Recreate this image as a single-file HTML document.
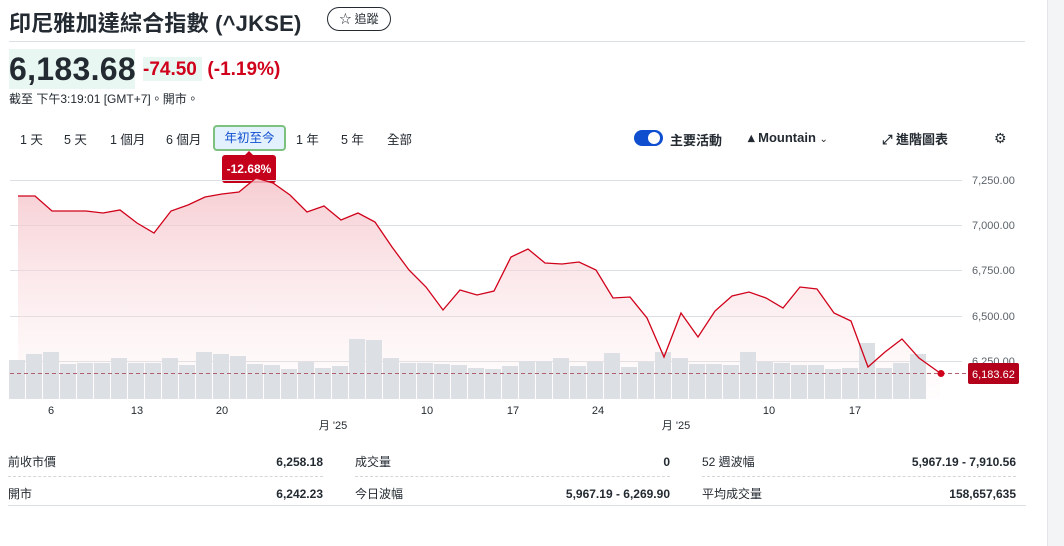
<!DOCTYPE html>
<html><head><meta charset="utf-8"><style>
*{margin:0;padding:0;box-sizing:border-box}
body{width:1064px;height:546px;overflow:hidden;background:#fff;font-family:"Liberation Sans","Noto Sans CJK TC",sans-serif;color:#232a31;position:relative}
.abs{position:absolute;white-space:nowrap}
.sb{position:absolute;left:1047px;top:0;width:17px;height:546px;background:#f3f4f6;border-left:1px solid #e3e5e8}
.tab{position:absolute;top:129px;font-size:12.5px;color:#232a31}
.row{position:absolute;font-size:12px;display:flex;justify-content:space-between;align-items:baseline}
.row b{font-weight:600}
</style></head><body>
<div class="sb"></div>
<div class="abs" style="left:9px;top:6px;font-size:22px;font-weight:bold;letter-spacing:0.2px">印尼雅加達綜合指數 (^JKSE)</div>
<div class="abs" style="left:327px;top:7px;width:64px;height:24px;border:1px solid #232a31;border-radius:12px;font-size:12px;line-height:22px;text-align:center">☆ 追蹤</div>
<div class="abs" style="left:9px;top:41px;width:1016px;height:1px;background:#dcdfe3"></div>
<div class="abs" style="left:9px;top:49px;width:126px;height:40px;background:#e8f7f1"></div>
<div class="abs" style="left:143px;top:57px;width:59px;height:24px;background:#e8f7f1"></div>
<div class="abs" style="left:9px;top:51px;font-size:32px;font-weight:bold;letter-spacing:0.3px">6,183.68</div>
<div class="abs" style="left:143px;top:59px;font-size:19px;font-weight:bold;color:#d0021b">-74.50 &nbsp;(-1.19%)</div>
<div class="abs" style="left:9px;top:90px;font-size:12px;color:#232a31">截至 下午3:19:01 [GMT+7]。開市。</div>
<div class="tab" style="left:20px">1 天</div>
<div class="tab" style="left:64px">5 天</div>
<div class="tab" style="left:110px">1 個月</div>
<div class="tab" style="left:166px">6 個月</div>
<div class="abs" style="left:213px;top:125px;width:73px;height:26px;border:2px solid #7cc27e;border-radius:4px;background:#e3f0fd;color:#0f4fcf;font-size:12.5px;line-height:22px;text-align:center">年初至今</div>
<div class="tab" style="left:296px">1 年</div>
<div class="tab" style="left:341px">5 年</div>
<div class="tab" style="left:387px">全部</div>
<div class="abs" style="left:222px;top:155px;width:54px;height:28px;background:#c5001b;border-radius:3px;color:#fff;font-size:12px;font-weight:bold;line-height:28px;text-align:center">-12.68%</div>
<div class="abs" style="left:244px;top:151px;width:0;height:0;border-left:5px solid transparent;border-right:5px solid transparent;border-bottom:5px solid #c5001b"></div>
<div class="abs" style="left:634px;top:130px;width:29px;height:16px;border-radius:8px;background:#0f4fcf"></div>
<div class="abs" style="left:648px;top:132px;width:12px;height:12px;border-radius:6px;background:#fff"></div>
<div class="abs" style="left:670px;top:130px;font-size:13px;font-weight:bold">主要活動</div>
<div class="abs" style="left:748px;top:130px;font-size:13px;font-weight:bold">▴ Mountain <span style="font-size:10px;font-weight:normal">⌄</span></div>
<div class="abs" style="left:882px;top:129px;font-size:13px;font-weight:bold">⤢ 進階圖表</div>
<div class="abs" style="left:994px;top:130px;font-size:14px">⚙</div>
<svg class="abs" style="left:0;top:0" width="1064" height="546">
<defs><linearGradient id="g" x1="0" y1="0" x2="0" y2="1"><stop offset="0" stop-color="#f4c3c9" stop-opacity=".85"/><stop offset="1" stop-color="#fde8ea" stop-opacity=".1"/></linearGradient></defs>
<g stroke="#dcdfe3" stroke-width="1">
<line x1="10" y1="180.5" x2="962" y2="180.5"/><line x1="10" y1="225.5" x2="962" y2="225.5"/><line x1="10" y1="270.5" x2="962" y2="270.5"/><line x1="10" y1="316.5" x2="962" y2="316.5"/><line x1="10" y1="361.5" x2="962" y2="361.5"/></g>
<path d="M18,196 L35,196 L52,211 L69,211 L86,211 L103,213 L120,210 L137,223 L154,233 L171,211 L188,205 L205,197 L222,194 L239,192 L256,178 L273,183 L290,195 L307,212 L324,206 L341,220 L358,213 L375,222 L392,247 L409,270 L426,287 L443,310 L460,290 L477,295 L494,291 L511,257 L528,249 L545,263 L562,264 L579,262 L596,270 L613,298 L630,297 L647,318 L664,357 L681,313 L698,337 L715,311 L732,296 L749,292 L766,298 L783,308 L800,287 L817,289 L834,313 L851,321 L868,367 L885,352 L902,339 L919,358 L940,373 L940,399 L18,399 Z" fill="url(#g)"/>
<g fill="#dcdfe3">
<rect x="9" y="360" width="16" height="39"/><rect x="26" y="354" width="16" height="45"/><rect x="43" y="352" width="16" height="47"/><rect x="60" y="364" width="16" height="35"/><rect x="77" y="363" width="16" height="36"/><rect x="94" y="363" width="16" height="36"/><rect x="111" y="358" width="16" height="41"/><rect x="128" y="363" width="16" height="36"/><rect x="145" y="363" width="16" height="36"/><rect x="162" y="358" width="16" height="41"/><rect x="179" y="365" width="16" height="34"/><rect x="196" y="352" width="16" height="47"/><rect x="213" y="354" width="16" height="45"/><rect x="230" y="356" width="16" height="43"/><rect x="247" y="364" width="16" height="35"/><rect x="264" y="365" width="16" height="34"/><rect x="281" y="369" width="16" height="30"/><rect x="298" y="362" width="16" height="37"/><rect x="315" y="368" width="16" height="31"/><rect x="332" y="366" width="16" height="33"/><rect x="349" y="339" width="16" height="60"/><rect x="366" y="340" width="16" height="59"/><rect x="383" y="358" width="16" height="41"/><rect x="400" y="363" width="16" height="36"/><rect x="417" y="363" width="16" height="36"/><rect x="434" y="364" width="16" height="35"/><rect x="451" y="365" width="16" height="34"/><rect x="468" y="368" width="16" height="31"/><rect x="485" y="369" width="16" height="30"/><rect x="502" y="366" width="16" height="33"/><rect x="519" y="361" width="16" height="38"/><rect x="536" y="361" width="16" height="38"/><rect x="553" y="358" width="16" height="41"/><rect x="570" y="366" width="16" height="33"/><rect x="587" y="362" width="16" height="37"/><rect x="604" y="353" width="16" height="46"/><rect x="621" y="367" width="16" height="32"/><rect x="638" y="362" width="16" height="37"/><rect x="655" y="352" width="16" height="47"/><rect x="672" y="358" width="16" height="41"/><rect x="689" y="364" width="16" height="35"/><rect x="706" y="364" width="16" height="35"/><rect x="723" y="365" width="16" height="34"/><rect x="740" y="352" width="16" height="47"/><rect x="757" y="362" width="16" height="37"/><rect x="774" y="363" width="16" height="36"/><rect x="791" y="365" width="16" height="34"/><rect x="808" y="365" width="16" height="34"/><rect x="825" y="369" width="16" height="30"/><rect x="842" y="368" width="16" height="31"/><rect x="859" y="343" width="16" height="56"/><rect x="876" y="368" width="16" height="31"/><rect x="893" y="363" width="16" height="36"/><rect x="910" y="354" width="16" height="45"/></g>
<line x1="10" y1="373.5" x2="968" y2="373.5" stroke="#b06070" stroke-dasharray="4,3" stroke-width="1"/>
<polyline fill="none" stroke="#d0021b" stroke-width="1.3" points="18,196 35,196 52,211 69,211 86,211 103,213 120,210 137,223 154,233 171,211 188,205 205,197 222,194 239,192 256,178 273,183 290,195 307,212 324,206 341,220 358,213 375,222 392,247 409,270 426,287 443,310 460,290 477,295 494,291 511,257 528,249 545,263 562,264 579,262 596,270 613,298 630,297 647,318 664,357 681,313 698,337 715,311 732,296 749,292 766,298 783,308 800,287 817,289 834,313 851,321 868,367 885,352 902,339 919,358 940,373"/>
<circle cx="941" cy="373.5" r="3.5" fill="#d0021b"/>
<g font-size="11" fill="#5b636a" font-family="Liberation Sans,sans-serif">
<text x="972" y="184">7,250.00</text><text x="972" y="229">7,000.00</text><text x="972" y="274">6,750.00</text><text x="972" y="320">6,500.00</text><text x="972" y="365">6,250.00</text></g>
<rect x="968" y="363" width="51" height="21" rx="2" fill="#b3001b"/>
<text x="972" y="378" font-size="11" fill="#fff" font-family="Liberation Sans,sans-serif">6,183.62</text>
<g font-size="11" fill="#232a31" font-family="Liberation Sans,'Noto Sans CJK TC',sans-serif" text-anchor="middle">
<text x="51" y="414">6</text><text x="137" y="414">13</text><text x="222" y="414">20</text><text x="427" y="414">10</text><text x="513" y="414">17</text><text x="598" y="414">24</text><text x="769" y="414">10</text><text x="855" y="414">17</text>
<text x="333" y="429">月 '25</text><text x="676" y="429">月 '25</text></g>
</svg>
<div class="row" style="left:8px;top:453px;width:315px"><span>前收市價</span><b>6,258.18</b></div>
<div class="row" style="left:355px;top:453px;width:315px"><span>成交量</span><b>0</b></div>
<div class="row" style="left:702px;top:453px;width:314px"><span>52 週波幅</span><b>5,967.19 - 7,910.56</b></div>
<div class="abs" style="left:8px;top:476px;width:315px;border-top:1px dashed #d4d6da"></div>
<div class="abs" style="left:355px;top:476px;width:315px;border-top:1px dashed #d4d6da"></div>
<div class="abs" style="left:702px;top:476px;width:314px;border-top:1px dashed #d4d6da"></div>
<div class="row" style="left:8px;top:485px;width:315px"><span>開市</span><b>6,242.23</b></div>
<div class="row" style="left:355px;top:485px;width:315px"><span>今日波幅</span><b>5,967.19 - 6,269.90</b></div>
<div class="row" style="left:702px;top:485px;width:314px"><span>平均成交量</span><b>158,657,635</b></div>
<div class="abs" style="left:8px;top:505px;width:1018px;height:1px;background:#dcdfe3"></div>
</body></html>
